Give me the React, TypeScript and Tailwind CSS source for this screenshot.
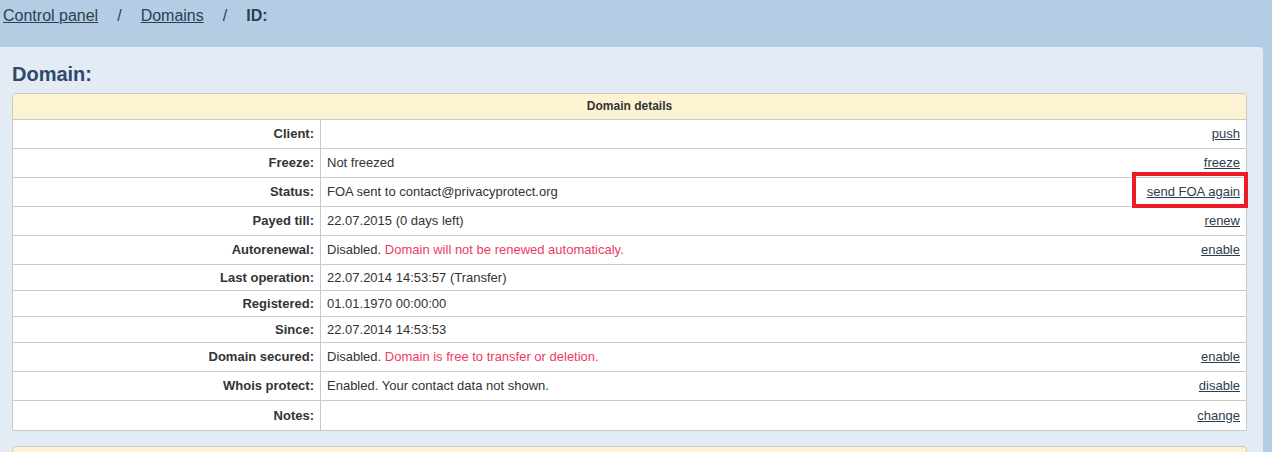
import React from 'react';

type Row = {
  label: string;
  value?: React.ReactNode;
  action?: string;
  marked?: boolean;
};

const Warn: React.FC<{ children: React.ReactNode }> = ({ children }) => (
  <span className="text-[#f03a5f]">{children}</span>
);

// Rows of the domain details table
const rows: Row[] = [
  { label: 'Client:', action: 'push' },
  { label: 'Freeze:', value: 'Not freezed', action: 'freeze' },
  { label: 'Status:', value: 'FOA sent to contact@privacyprotect.org', action: 'send FOA again', marked: true },
  { label: 'Payed till:', value: '22.07.2015 (0 days left)', action: 'renew' },
  {
    label: 'Autorenewal:',
    value: (
      <>
        Disabled. <Warn>Domain will not be renewed automaticaly.</Warn>
      </>
    ),
    action: 'enable',
  },
  { label: 'Last operation:', value: '22.07.2014 14:53:57 (Transfer)' },
  { label: 'Registered:', value: '01.01.1970 00:00:00' },
  { label: 'Since:', value: '22.07.2014 14:53:53' },
  {
    label: 'Domain secured:',
    value: (
      <>
        Disabled. <Warn>Domain is free to transfer or deletion.</Warn>
      </>
    ),
    action: 'enable',
  },
  { label: 'Whois protect:', value: 'Enabled. Your contact data not shown.', action: 'disable' },
  { label: 'Notes:', action: 'change' },
];

const App: React.FC = () => {
  return (
    <div className="min-h-screen bg-[#b5cde4] font-['Liberation_Sans',Arial,sans-serif] text-[#333] overflow-hidden">
      {/* Breadcrumbs */}
      <div className="h-[47px] pl-[3px] pt-[7px] text-[16px] leading-[18px] text-[#2c3e50] flex">
        <a href="#" className="underline">Control panel</a>
        <span className="mx-[19px]">/</span>
        <a href="#" className="underline">Domains</a>
        <span className="mx-[19px]">/</span>
        <span className="font-bold">ID:</span>
      </div>

      {/* Main panel */}
      <div className="mr-[9px] bg-[#e3ebf4] rounded-tr-[4px] pl-[12px] pr-[16px] pt-[15px] pb-[40px]">
        <h1 className="text-[20px] leading-[24px] font-bold text-[#2d4a6b] mb-[7px]">Domain:</h1>

        <div className="border border-[#c9c9c9] rounded-t-[4px] bg-white text-[13px] leading-[16px]">
          <div className="h-[26px] pb-[1px] bg-[#fdf3d2] border-b border-[#c9c9c9] rounded-t-[4px] flex items-center justify-center text-[12px] font-bold">
            Domain details
          </div>
          {rows.map((row, i) => (
            <div
              key={row.label}
              className={`flex ${row.action ? 'h-[29px]' : 'h-[26px]'} ${i < rows.length - 1 ? 'border-b border-[#c9c9c9]' : ''}`}
            >
              <div className="w-[308px] shrink-0 border-r border-[#c9c9c9] flex items-center justify-end pr-[6px] font-bold">
                {row.label}
              </div>
              <div className="flex-1 flex items-center justify-between pl-[6px] pr-[6px]">
                <span>{row.value}</span>
                {row.action && (
                  <a href="#" className="relative underline text-[#2c3e50]">
                    {row.action}
                    {row.marked && (
                      <span className="absolute -left-[15px] -right-[8px] -top-[12px] -bottom-[8px] border-4 border-[#ed1c24]" />
                    )}
                  </a>
                )}
              </div>
            </div>
          ))}
        </div>

        <div className="mt-[15px] h-[26px] border border-[#c9c9c9] rounded-t-[4px] bg-[#fdf3d2]" />
      </div>
    </div>
  );
};

export default App;
